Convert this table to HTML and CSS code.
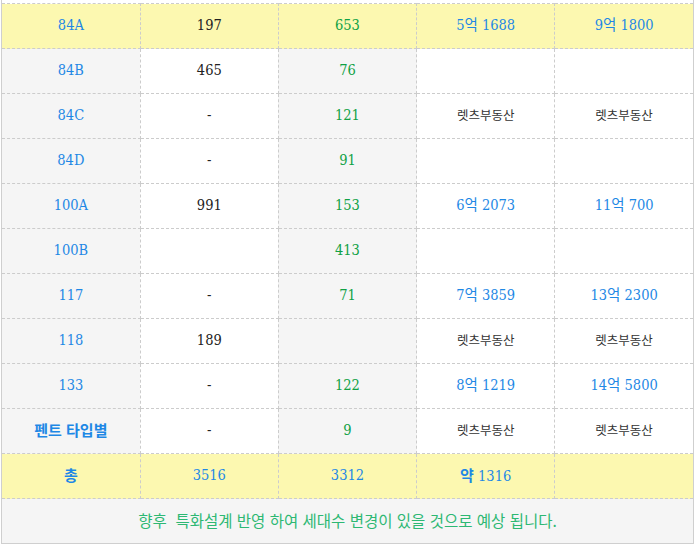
FILE: index.html
```html
<!DOCTYPE html>
<html lang="ko">
<head>
<meta charset="utf-8">
<link rel="stylesheet" href="styles.css">
</head>
<body>
<div class="wrap">
<table class="supply">
<tbody>
<tr class="hl"><td class="type">84A</td><td class="num">197</td><td class="green">653</td><td class="blue">5억 1688</td><td class="blue">9억 1800</td></tr>
<tr><td class="type">84B</td><td class="num">465</td><td class="green">76</td><td></td><td></td></tr>
<tr><td class="type">84C</td><td class="num">-</td><td class="green">121</td><td class="ko">렛츠부동산</td><td class="ko">렛츠부동산</td></tr>
<tr><td class="type">84D</td><td class="num">-</td><td class="green">91</td><td></td><td></td></tr>
<tr><td class="type">100A</td><td class="num">991</td><td class="green">153</td><td class="blue">6억 2073</td><td class="blue">11억 700</td></tr>
<tr><td class="type">100B</td><td class="num"></td><td class="green">413</td><td></td><td></td></tr>
<tr><td class="type">117</td><td class="num">-</td><td class="green">71</td><td class="blue">7억 3859</td><td class="blue">13억 2300</td></tr>
<tr><td class="type">118</td><td class="num">189</td><td class="green"></td><td class="ko">렛츠부동산</td><td class="ko">렛츠부동산</td></tr>
<tr><td class="type">133</td><td class="num">-</td><td class="green">122</td><td class="blue">8억 1219</td><td class="blue">14억 5800</td></tr>
<tr><td class="type bold">펜트 타입별</td><td class="num">-</td><td class="green">9</td><td class="ko">렛츠부동산</td><td class="ko">렛츠부동산</td></tr>
<tr class="hl total"><td class="blue bold">총</td><td class="blue">3516</td><td class="blue">3312</td><td class="blue"><span class="bold">약</span> 1316</td><td></td></tr>
<tr class="note"><td colspan="5">향후&nbsp; 특화설계 반영 하여 세대수 변경이 있을 것으로 예상 됩니다.</td></tr>
</tbody>
</table>
</div>
</body>
</html>
```
FILE: styles.css
```css
html, body {
  margin: 0;
  padding: 0;
  background: #fff;
}
body {
  font-family: "DejaVu Serif", "Noto Sans CJK KR", serif;
  font-stretch: condensed;
  color: #222;
}
.wrap {
  width: 691px;
  margin-left: 1px;
  padding-top: 3px;
  border: 1px solid #cfcfcf;
  border-top: none;
}
.supply {
  width: 100%;
  border-collapse: collapse;
  table-layout: fixed;
}
.supply td {
  height: 42px;
  padding: 0 0 2px;
  border: 1px dashed #cccccc;
  text-align: center;
  vertical-align: middle;
  font-size: 14.5px;
  line-height: 18px;
  background: #fff;
}
.supply td:first-child { border-left: none; }
.supply td:last-child { border-right: none; }
.supply td:nth-child(1),
.supply td:nth-child(3) { background: #f5f5f5; }
.supply tr.hl td { background: #fcf8b0; }
.type { color: #1e88e5; }
.blue { color: #1e88e5; }
.green { color: #10a145; }
.num { color: #222; }
.bold {
  font-weight: bold;
  font-family: "Noto Sans CJK KR", sans-serif;
  font-size: 15px;
}
.supply td.bold { font-size: 15px; }
.supply td.ko {
  font-family: "Noto Sans CJK KR", sans-serif;
  font-size: 12.5px;
  color: #333;
}
.supply tr.note td {
  background: #f5f5f5;
  border-bottom: none;
  font-family: "Noto Sans CJK KR", sans-serif;
  font-size: 15.5px;
  color: #2db873;
}
```
